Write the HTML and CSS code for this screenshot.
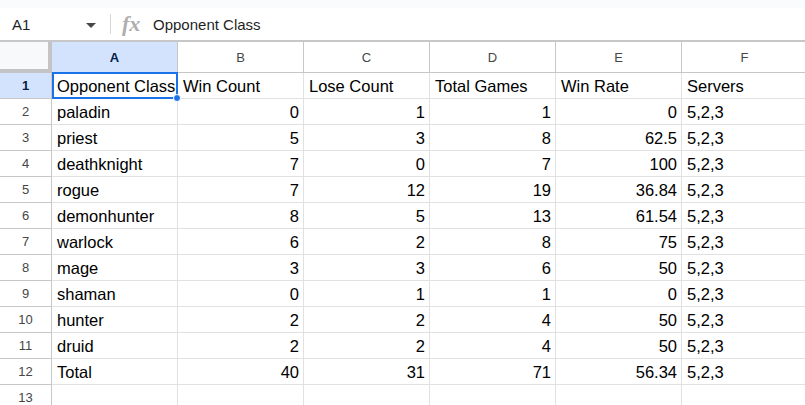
FILE: index.html
```html
<!DOCTYPE html>
<html lang="en">
    <head>
        <meta charset="UTF-8" />
        <title>Opponent Class</title>
        <link rel="stylesheet" href="styles.css">
    </head>
    <body>
        <div class="topStrip"></div>
        <!-- 수식 입력줄 -->
        <div class="formulaBar">
            <div class="nameBox">A1</div>
            <span class="caret"></span>
            <span class="divider"></span>
            <span class="fx">fx</span>
            <div class="formulaText">Opponent Class</div>
        </div>
        <div class="sheet">
            <div class="row headRow">
                <div class="corner"></div>
                <div class="colHead active">A</div>
                <div class="colHead">B</div>
                <div class="colHead">C</div>
                <div class="colHead">D</div>
                <div class="colHead">E</div>
                <div class="colHead">F</div>
            </div>
            <div class="row">
                <div class="rowHead active">1</div>
                <div class="cell selected">Opponent Class<span class="sel"></span></div>
                <div class="cell">Win Count</div>
                <div class="cell">Lose Count</div>
                <div class="cell">Total Games</div>
                <div class="cell">Win Rate</div>
                <div class="cell">Servers</div>
            </div>
            <div class="row">
                <div class="rowHead">2</div>
                <div class="cell">paladin</div>
                <div class="cell num">0</div>
                <div class="cell num">1</div>
                <div class="cell num">1</div>
                <div class="cell num">0</div>
                <div class="cell">5,2,3</div>
            </div>
            <div class="row">
                <div class="rowHead">3</div>
                <div class="cell">priest</div>
                <div class="cell num">5</div>
                <div class="cell num">3</div>
                <div class="cell num">8</div>
                <div class="cell num">62.5</div>
                <div class="cell">5,2,3</div>
            </div>
            <div class="row">
                <div class="rowHead">4</div>
                <div class="cell">deathknight</div>
                <div class="cell num">7</div>
                <div class="cell num">0</div>
                <div class="cell num">7</div>
                <div class="cell num">100</div>
                <div class="cell">5,2,3</div>
            </div>
            <div class="row">
                <div class="rowHead">5</div>
                <div class="cell">rogue</div>
                <div class="cell num">7</div>
                <div class="cell num">12</div>
                <div class="cell num">19</div>
                <div class="cell num">36.84</div>
                <div class="cell">5,2,3</div>
            </div>
            <div class="row">
                <div class="rowHead">6</div>
                <div class="cell">demonhunter</div>
                <div class="cell num">8</div>
                <div class="cell num">5</div>
                <div class="cell num">13</div>
                <div class="cell num">61.54</div>
                <div class="cell">5,2,3</div>
            </div>
            <div class="row">
                <div class="rowHead">7</div>
                <div class="cell">warlock</div>
                <div class="cell num">6</div>
                <div class="cell num">2</div>
                <div class="cell num">8</div>
                <div class="cell num">75</div>
                <div class="cell">5,2,3</div>
            </div>
            <div class="row">
                <div class="rowHead">8</div>
                <div class="cell">mage</div>
                <div class="cell num">3</div>
                <div class="cell num">3</div>
                <div class="cell num">6</div>
                <div class="cell num">50</div>
                <div class="cell">5,2,3</div>
            </div>
            <div class="row">
                <div class="rowHead">9</div>
                <div class="cell">shaman</div>
                <div class="cell num">0</div>
                <div class="cell num">1</div>
                <div class="cell num">1</div>
                <div class="cell num">0</div>
                <div class="cell">5,2,3</div>
            </div>
            <div class="row">
                <div class="rowHead">10</div>
                <div class="cell">hunter</div>
                <div class="cell num">2</div>
                <div class="cell num">2</div>
                <div class="cell num">4</div>
                <div class="cell num">50</div>
                <div class="cell">5,2,3</div>
            </div>
            <div class="row">
                <div class="rowHead">11</div>
                <div class="cell">druid</div>
                <div class="cell num">2</div>
                <div class="cell num">2</div>
                <div class="cell num">4</div>
                <div class="cell num">50</div>
                <div class="cell">5,2,3</div>
            </div>
            <div class="row">
                <div class="rowHead">12</div>
                <div class="cell">Total</div>
                <div class="cell num">40</div>
                <div class="cell num">31</div>
                <div class="cell num">71</div>
                <div class="cell num">56.34</div>
                <div class="cell">5,2,3</div>
            </div>
            <div class="row">
                <div class="rowHead">13</div>
                <div class="cell"></div>
                <div class="cell"></div>
                <div class="cell"></div>
                <div class="cell"></div>
                <div class="cell"></div>
                <div class="cell"></div>
            </div>
        </div>
    </body>
</html>
```

FILE: styles.css
```css
body {
    margin: 0;
    width: 805px;
    height: 405px;
    overflow: hidden;
    background-color: #fff;
    font-family: "Liberation Sans", Arial, sans-serif;
    color: #000;
}
.topStrip {
    height: 8px;
    background-color: #f9fbfd;
}

/* 수식 입력줄 */
.formulaBar {
    height: 32px;
    display: flex;
    align-items: center;
    border-bottom: 2px solid #c7c7c7;
}
.nameBox {
    width: 74px;
    padding-left: 12px;
    font-size: 15px;
    color: #1f1f1f;
}
.caret {
    width: 0;
    height: 0;
    border-left: 5px solid transparent;
    border-right: 5px solid transparent;
    border-top: 5px solid #444746;
    margin-top: 2px;
}
.divider {
    width: 1px;
    height: 20px;
    background-color: #d6d6d6;
    margin-left: 14px;
}
.fx {
    margin-left: 11px;
    width: 31px;
    font-family: "Liberation Serif", serif;
    font-style: italic;
    font-weight: bold;
    font-size: 22px;
    line-height: 1;
    color: #aeaeae;
}
.formulaText {
    font-size: 15px;
    color: #1f1f1f;
}

/* 시트 */
.sheet {
    width: 808px;
}
.row {
    display: grid;
    grid-template-columns: 52px repeat(6, 126px);
}
.headRow {
    height: 31px;
}
.corner {
    background-color: #f8f9fa;
    border-right: 4px solid #c4c4c4;
    border-bottom: 4px solid #c4c4c4;
}
.colHead {
    display: flex;
    align-items: center;
    justify-content: center;
    font-size: 13px;
    color: #444746;
    border-right: 1px solid #c7c7c7;
    border-bottom: 1px solid #c7c7c7;
    padding-top: 1px;
}
.rowHead {
    height: 26px;
    display: flex;
    align-items: center;
    justify-content: center;
    font-size: 13px;
    color: #444746;
    border-right: 1px solid #c7c7c7;
    border-bottom: 1px solid #c7c7c7;
    box-sizing: border-box;
}
.active {
    background-color: #d3e3fd;
    color: #041e49;
    font-weight: bold;
}
.cell {
    height: 26px;
    box-sizing: border-box;
    padding: 2px 4px 0 5px;
    display: flex;
    align-items: center;
    font-size: 16.5px;
    white-space: nowrap;
    border-right: 1px solid #e1e1e1;
    border-bottom: 1px solid #e1e1e1;
}
.num {
    justify-content: flex-end;
}

/* 선택된 셀 표시 */
.selected {
    position: relative;
}
.sel {
    position: absolute;
    left: 0;
    top: -1px;
    right: -1px;
    bottom: -1px;
    border: 2px solid #1a73e8;
}
.sel::after {
    content: "";
    position: absolute;
    right: -5px;
    bottom: -5px;
    width: 6px;
    height: 6px;
    border-radius: 50%;
    background-color: #1a73e8;
    border: 1px solid #fff;
}
```
